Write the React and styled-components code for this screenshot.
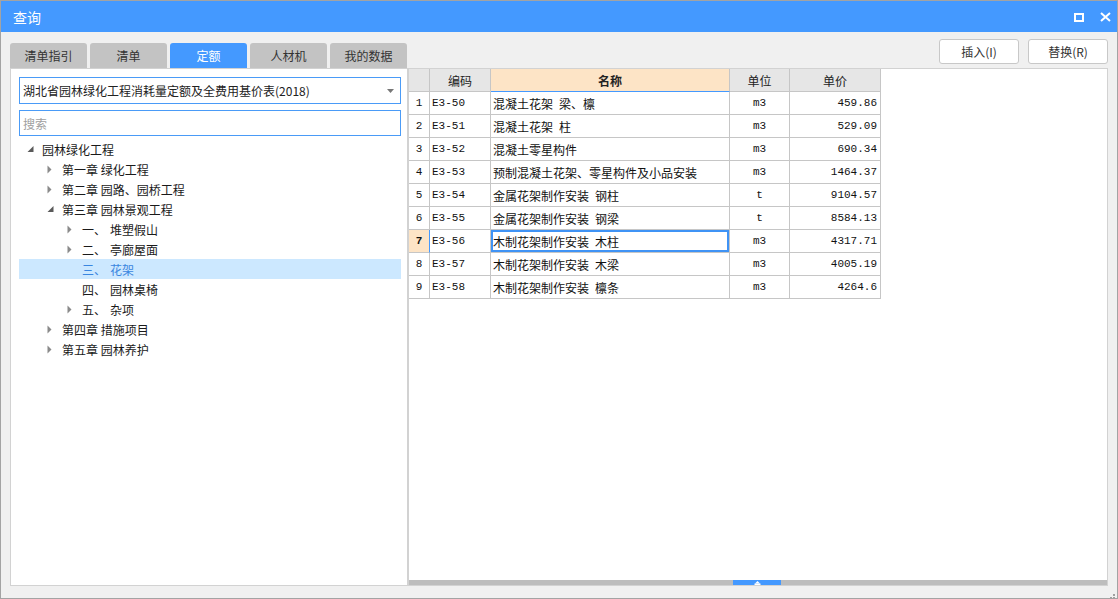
import React from 'react';
import styled, { createGlobalStyle } from 'styled-components';

const Global = createGlobalStyle`
  html, body { margin: 0; padding: 0; background: #ffffff; }
  body { font-family: "Noto Sans CJK SC", "Noto Sans", sans-serif; font-size: 12px; color: #222; }
  * { box-sizing: border-box; }
`;

const CJK = `"Noto Sans CJK SC", "Noto Sans", sans-serif`;
const MONO = `"Liberation Mono", "Noto Sans CJK SC", monospace`;
const BLUE = '#4499ff';

const Window = styled.div`
  position: relative;
  width: 1118px;
  height: 599px;
  border: 1px solid #a3a3a3;
  background: #f0f0f0;
  display: flex;
  flex-direction: column;
`;

const TitleBar = styled.div`
  height: 31px;
  flex: none;
  background: ${BLUE};
  display: flex;
  align-items: center;
  padding: 0 6px 0 12px;
  color: #fff;
`;

const Title = styled.div`
  flex: 1;
  font-family: ${CJK};
  font-size: 14px;
  line-height: 1;
  margin-top: 1px;
`;

const TitleButtons = styled.div`
  display: flex;
  align-items: center;
  gap: 16px;
  margin-top: 1px;
`;

const Body = styled.div`
  flex: 1;
  min-height: 0;
  display: grid;
  grid-template-columns: 398px 1fr;
  grid-template-rows: 36px 1fr;
  padding: 0 9px 12px 9px;
`;

const Tabs = styled.div`
  display: flex;
  gap: 3px;
  align-self: end;
`;

const Tab = styled.div`
  width: 77px;
  height: 25px;
  border-radius: 3px 3px 0 0;
  background: ${p => (p.$active ? BLUE : '#c3c3c3')};
  color: ${p => (p.$active ? '#fff' : '#333')};
  font-family: ${CJK};
  font-size: 12px;
  display: flex;
  align-items: center;
  justify-content: center;
`;

const ButtonBar = styled.div`
  display: flex;
  justify-content: flex-end;
  align-items: flex-start;
  gap: 9px;
  padding-top: 7px;
`;

const Button = styled.div`
  width: 80px;
  height: 25px;
  border: 1px solid #c8c8c8;
  border-radius: 3px;
  background: #fff;
  color: #333;
  font-family: ${CJK};
  font-size: 12px;
  display: flex;
  align-items: center;
  justify-content: center;
`;

const LeftPanel = styled.div`
  background: #fff;
  border: 1px solid #d2d2d2;
  padding: 8px 6px 0 8px;
  display: flex;
  flex-direction: column;
  min-height: 0;
`;

const Select = styled.div`
  height: 27px;
  border: 1px solid #4a9bf7;
  display: flex;
  align-items: center;
  padding: 0 6px 0 3px;
  font-family: ${CJK};
  font-size: 12px;
  color: #222;
`;

const SelectText = styled.div`
  flex: 1;
  white-space: nowrap;
`;

const Search = styled.div`
  height: 26px;
  margin-top: 6px;
  border: 1px solid #4a9bf7;
  display: flex;
  align-items: center;
  padding-left: 3px;
  font-family: ${CJK};
  font-size: 12px;
  color: #a0a0a0;
`;

const Tree = styled.div`
  margin-top: 3px;
  display: flex;
  flex-direction: column;
`;

const TreeRow = styled.div`
  height: 20px;
  display: flex;
  align-items: center;
  padding-left: ${p => 8 + p.$level * 20}px;
  background: ${p => (p.$selected ? '#cce8ff' : 'transparent')};
  color: ${p => (p.$selected ? '#3a86e0' : '#1a1a1a')};
  font-family: ${CJK};
  font-size: 12px;
  white-space: pre;
`;

const Toggle = styled.span`
  width: 15px;
  height: 20px;
  flex: none;
  display: flex;
`;

const Prefix = styled.span`
  display: inline-block;
  width: 28px;
`;

const RightPanel = styled.div`
  background: #fff;
  border: 1px solid #d2d2d2;
  display: flex;
  flex-direction: column;
  min-height: 0;
`;

const GridArea = styled.div`
  flex: 1;
  min-height: 0;
`;

const Grid = styled.div`
  display: grid;
  grid-template-columns: 21px 61px 239px 60px 91px;
  width: 472px;
`;

const HeadCell = styled.div`
  height: 23px;
  background: ${p => (p.$active ? '#fde4c6' : '#e6e6e6')};
  border-right: 1px solid #c6c6c6;
  border-bottom: 1px solid ${p => (p.$active ? '#4499ff' : '#c6c6c6')};
  font-family: ${CJK};
  font-size: 12px;
  font-weight: ${p => (p.$active ? 700 : 400)};
  color: #222;
  display: flex;
  align-items: center;
  justify-content: center;
`;

const Cell = styled.div`
  height: 23px;
  border-right: 1px solid ${p => (p.$markRight ? '#4499ff' : '#c6c6c6')};
  border-bottom: 1px solid #c6c6c6;
  background: ${p => (p.$hl ? '#fde4c6' : '#fff')};
  font-family: ${p => (p.$cjk ? CJK : MONO)};
  font-size: ${p => (p.$cjk ? '12px' : '11px')};
  font-weight: ${p => (p.$bold ? 700 : 400)};
  color: #111;
  display: flex;
  align-items: center;
  justify-content: ${p => p.$align || 'flex-start'};
  padding: 0 ${p => (p.$align === 'flex-end' ? '3px' : '2px')} 0 2px;
  box-shadow: ${p => (p.$focus ? 'inset 0 0 0 2px #3f93f5' : 'none')};
  white-space: pre;
`;

const HScroll = styled.div`
  height: 5px;
  flex: none;
  background: #bdbdbd;
  display: flex;
  justify-content: center;
`;

const Thumb = styled.div`
  width: 48px;
  height: 5px;
  background: ${BLUE};
  display: flex;
  align-items: center;
  justify-content: center;
  margin-left: -2px;
`;

const Grip = styled.div`
  position: absolute;
  right: 2px;
  bottom: 2px;
  width: 8px;
  height: 8px;
`;

const TriDown = () => (
  <svg width="15" height="20" viewBox="0 0 15 20">
    <polygon points="6.5,7 6.5,13 0.5,13" fill="#5a5a5a" />
  </svg>
);

const TriRight = () => (
  <svg width="15" height="20" viewBox="0 0 15 20">
    <polygon points="0.5,6.5 4.5,10.5 0.5,14.5" fill="#8a8a8a" />
  </svg>
);

const tree = [
  { level: 0, state: 'open', text: '园林绿化工程' },
  { level: 1, state: 'closed', text: '第一章 绿化工程' },
  { level: 1, state: 'closed', text: '第二章 园路、园桥工程' },
  { level: 1, state: 'open', text: '第三章 园林景观工程' },
  { level: 2, state: 'closed', prefix: '一、', text: '堆塑假山' },
  { level: 2, state: 'closed', prefix: '二、', text: '亭廊屋面' },
  { level: 2, state: 'none', prefix: '三、', text: '花架', selected: true },
  { level: 2, state: 'none', prefix: '四、', text: '园林桌椅' },
  { level: 2, state: 'closed', prefix: '五、', text: '杂项' },
  { level: 1, state: 'closed', text: '第四章 措施项目' },
  { level: 1, state: 'closed', text: '第五章 园林养护' },
];

const rows = [
  ['E3-50', '混凝土花架\u2002梁、檩', 'm3', '459.86'],
  ['E3-51', '混凝土花架\u2002柱', 'm3', '529.09'],
  ['E3-52', '混凝土零星构件', 'm3', '690.34'],
  ['E3-53', '预制混凝土花架、零星构件及小品安装', 'm3', '1464.37'],
  ['E3-54', '金属花架制作安装\u2002钢柱', 't', '9104.57'],
  ['E3-55', '金属花架制作安装\u2002钢梁', 't', '8584.13'],
  ['E3-56', '木制花架制作安装\u2002木柱', 'm3', '4317.71'],
  ['E3-57', '木制花架制作安装\u2002木梁', 'm3', '4005.19'],
  ['E3-58', '木制花架制作安装\u2002檩条', 'm3', '4264.6'],
];

const tabs = ['清单指引', '清单', '定额', '人材机', '我的数据'];

export default function App() {
  return (
    <>
      <Global />
      <Window>
        <TitleBar>
          <Title>查询</Title>
          <TitleButtons>
            <svg width="10" height="9" viewBox="0 0 10 9">
              <rect x="1" y="1" width="8" height="7" fill="none" stroke="#fff" strokeWidth="2" />
            </svg>
            <svg width="11" height="10" viewBox="0 0 11 10">
              <path d="M1 1 L10 9 M10 1 L1 9" stroke="#fff" strokeWidth="2" />
            </svg>
          </TitleButtons>
        </TitleBar>
        <Body>
          <Tabs>
            {tabs.map((t, i) => (
              <Tab key={t} $active={i === 2}>{t}</Tab>
            ))}
          </Tabs>
          <ButtonBar>
            <Button>插入(I)</Button>
            <Button>替换(R)</Button>
          </ButtonBar>
          <LeftPanel>
            <Select>
              <SelectText>湖北省园林绿化工程消耗量定额及全费用基价表(2018)</SelectText>
              <svg width="7" height="4" viewBox="0 0 7 4">
                <polygon points="0,0 7,0 3.5,4" fill="#777" />
              </svg>
            </Select>
            <Search>搜索</Search>
            <Tree>
              {tree.map((n, i) => (
                <TreeRow key={i} $level={n.level} $selected={n.selected}>
                  <Toggle>
                    {n.state === 'open' && <TriDown />}
                    {n.state === 'closed' && <TriRight />}
                  </Toggle>
                  {n.prefix && <Prefix>{n.prefix}</Prefix>}
                  {n.text}
                </TreeRow>
              ))}
            </Tree>
          </LeftPanel>
          <RightPanel>
            <GridArea>
              <Grid>
                <HeadCell />
                <HeadCell>编码</HeadCell>
                <HeadCell $active>名称</HeadCell>
                <HeadCell>单位</HeadCell>
                <HeadCell>单价</HeadCell>
                {rows.map((r, i) => {
                  const sel = i === 6;
                  return (
                    <React.Fragment key={r[0]}>
                      <Cell $align="center" $hl={sel} $bold={sel} $markRight={sel}>{i + 1}</Cell>
                      <Cell>{r[0]}</Cell>
                      <Cell $cjk $focus={sel}>{r[1]}</Cell>
                      <Cell $align="center">{r[2]}</Cell>
                      <Cell $align="flex-end">{r[3]}</Cell>
                    </React.Fragment>
                  );
                })}
              </Grid>
            </GridArea>
            <HScroll>
              <Thumb>
                <svg width="7" height="4" viewBox="0 0 7 4">
                  <polygon points="3.5,0 6,2.5 1,2.5" fill="#fff" />
                  <rect x="0.5" y="2.5" width="6" height="1.5" fill="#fff" />
                </svg>
              </Thumb>
            </HScroll>
          </RightPanel>
        </Body>
        <Grip>
          <svg width="8" height="8" viewBox="0 0 8 8">
            <rect x="6" y="0" width="2" height="2" fill="#a0a0a0" />
            <rect x="3" y="3" width="2" height="2" fill="#a0a0a0" />
            <rect x="6" y="3" width="2" height="2" fill="#a0a0a0" />
            <rect x="0" y="6" width="2" height="2" fill="#a0a0a0" />
            <rect x="3" y="6" width="2" height="2" fill="#a0a0a0" />
            <rect x="6" y="6" width="2" height="2" fill="#a0a0a0" />
          </svg>
        </Grip>
      </Window>
    </>
  );
}
